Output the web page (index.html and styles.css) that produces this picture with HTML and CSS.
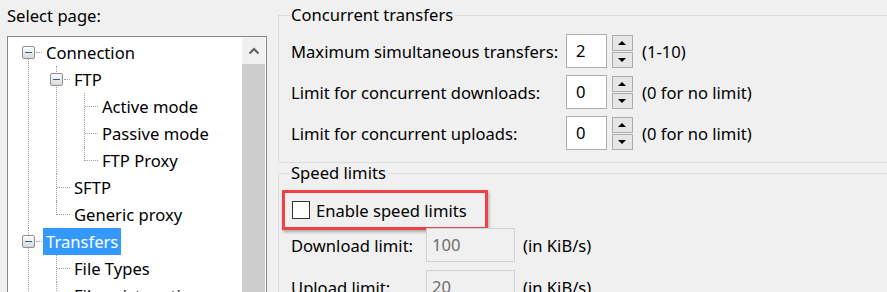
FILE: index.html
```html
<!DOCTYPE html>
<html lang="en">
<head>
    <meta charset="UTF-8">
    <title>Settings - Transfers</title>
    <link rel="stylesheet" href="styles.css">
</head>
<body>
    <div class="dialog">
        <!-- Page tree -->
        <div class="pages">
            <div class="caption">Select page:</div>
            <div class="tree">
                <div class="tree-list">
                    <ul class="nodes">
                        <li class="first">
                            <div class="node"><span class="twig open"><i class="exp"></i></span><span class="label">Connection</span></div>
                            <ul class="nodes">
                                <li>
                                    <div class="node"><span class="twig open"><i class="exp"></i></span><span class="label">FTP</span></div>
                                    <ul class="nodes">
                                        <li><div class="node"><span class="twig"></span><span class="label">Active mode</span></div></li>
                                        <li><div class="node"><span class="twig"></span><span class="label">Passive mode</span></div></li>
                                        <li class="last"><div class="node"><span class="twig"></span><span class="label">FTP Proxy</span></div></li>
                                    </ul>
                                </li>
                                <li><div class="node"><span class="twig"></span><span class="label">SFTP</span></div></li>
                                <li class="last"><div class="node"><span class="twig"></span><span class="label">Generic proxy</span></div></li>
                            </ul>
                        </li>
                        <li>
                            <div class="node"><span class="twig open"><i class="exp"></i></span><span class="label selected">Transfers</span></div>
                            <ul class="nodes">
                                <li><div class="node"><span class="twig"></span><span class="label">File Types</span></div></li>
                                <li><div class="node"><span class="twig"></span><span class="label">File exists action</span></div></li>
                            </ul>
                        </li>
                        <li><div class="node"><span class="twig"></span><span class="label">Interface</span></div></li>
                    </ul>
                </div>
                <div class="scrollbar">
                    <div class="scroll-up">
                        <svg width="12" height="8" viewBox="0 0 12 8"><path d="M1.5 6.5 L6 2 L10.5 6.5" fill="none" stroke="#606060" stroke-width="2"/></svg>
                    </div>
                    <div class="thumb"></div>
                </div>
            </div>
        </div>

        <!-- Page content -->
        <div class="content">
            <fieldset class="group">
                <legend>Concurrent transfers</legend>
                <div class="spin-row">
                    <span>Maximum simultaneous transfers:</span>
                    <span class="edit">2</span>
                    <span class="spinner"><b class="up"></b><b class="down"></b></span>
                    <span>(1-10)</span>
                </div>
                <div class="spin-row">
                    <span>Limit for concurrent downloads:</span>
                    <span class="edit">0</span>
                    <span class="spinner"><b class="up"></b><b class="down"></b></span>
                    <span>(0 for no limit)</span>
                </div>
                <div class="spin-row">
                    <span>Limit for concurrent uploads:</span>
                    <span class="edit">0</span>
                    <span class="spinner"><b class="up"></b><b class="down"></b></span>
                    <span>(0 for no limit)</span>
                </div>
            </fieldset>

            <fieldset class="group">
                <legend>Speed limits</legend>
                <div class="check-row">
                    <label class="highlight"><span class="checkbox"></span>Enable speed limits</label>
                </div>
                <div class="limit-row">
                    <span>Download limit:</span>
                    <span class="edit disabled">100</span>
                    <span>(in KiB/s)</span>
                </div>
                <div class="limit-row">
                    <span>Upload limit:</span>
                    <span class="edit disabled">20</span>
                    <span>(in KiB/s)</span>
                </div>
            </fieldset>
        </div>
    </div>
</body>
</html>
```

FILE: styles.css
```css
body {
    margin: 0;
    background-color: #f0f0f0;
    font-family: "Noto Sans", "Open Sans", sans-serif;
    font-size: 16.6px;
    color: #000;
    overflow: hidden;
}
.dialog {
    display: flex;
    height: 292px;
}
.pages {
    width: 271px;
    padding-left: 7px;
    flex: none;
}
.caption {
    line-height: 20px;
    margin-top: 6px;
}
.tree {
    display: flex;
    width: 260px;
    height: 300px;
    margin-top: 10px;
    box-sizing: border-box;
    border: 1px solid #828790;
    background-color: #fff;
}
.tree-list {
    flex: 1;
    padding-top: 2px;
}
.nodes {
    list-style: none;
    margin: 0;
    padding: 0;
}
.nodes .nodes {
    padding-left: 28px;
}
.nodes li {
    position: relative;
}
.nodes li::before {
    content: "";
    position: absolute;
    left: 20px;
    top: 0;
    bottom: 0;
    border-left: 1px dotted #a0a0a0;
}
.nodes li.first::before {
    top: 14px;
}
.nodes li.last::before {
    bottom: auto;
    height: 14px;
}
.node {
    display: flex;
    height: 27px;
}
.twig {
    position: relative;
    width: 35px;
    flex: none;
}
.twig::after {
    content: "";
    position: absolute;
    left: 21px;
    top: 13px;
    width: 13px;
    border-top: 1px dotted #a0a0a0;
}
.twig.open::after {
    left: 28px;
    width: 6px;
}
.exp {
    position: absolute;
    left: 14px;
    top: 7px;
    width: 13px;
    height: 13px;
    box-sizing: border-box;
    border: 1px solid #919191;
    border-radius: 2px;
    background: linear-gradient(#fdfdfd, #d9d9d9);
    z-index: 1;
}
.exp::after {
    content: "";
    position: absolute;
    left: 2px;
    top: 5px;
    width: 7px;
    height: 1px;
    background-color: #3f5a86;
}
.label {
    padding: 0 3px;
    line-height: 27px;
    white-space: nowrap;
}
.label.selected {
    background-color: #3399ff;
    color: #fff;
}
.scrollbar {
    width: 23px;
    margin-right: 1px;
    background-color: #f0f0f0;
    display: flex;
    flex-direction: column;
}
.scroll-up {
    height: 27px;
    display: flex;
    align-items: center;
    justify-content: center;
}
.thumb {
    flex: 1;
    background-color: #cdcdcd;
}
.content {
    flex: 1;
    overflow: hidden;
    padding-top: 5px;
}
.group {
    margin: 0 -20px 0 0;
    padding: 9px 0 12px 12px;
    border: 1px solid #dcdcdc;
    min-width: 0;
}
.group legend {
    padding: 0 2px;
    margin-left: -2px;
    line-height: 20px;
}
.spin-row {
    display: grid;
    grid-template-columns: 270px 41px 21px auto;
    column-gap: 5px;
    align-items: center;
    height: 34px;
    margin-bottom: 7px;
}
.spin-row:last-child {
    margin-bottom: 0;
}
.spin-row > span:last-child {
    margin-left: 4px;
}
.edit {
    height: 34px;
    box-sizing: border-box;
    border: 1px solid #adadad;
    background-color: #fff;
    padding-left: 9px;
    line-height: 32px;
}
.edit.disabled {
    background-color: #f0f0f0;
    border-color: #d2d2d2;
    color: #6d6d6d;
    padding-left: 5px;
}
.spinner {
    display: flex;
    flex-direction: column;
    gap: 1px;
    height: 33px;
}
.spinner b {
    flex: 1;
    position: relative;
    border: 1px solid #acacac;
    background-color: #e6e6e6;
}
.spinner b::after {
    content: "";
    position: absolute;
    left: 5px;
    top: 5px;
    border-left: 4px solid transparent;
    border-right: 4px solid transparent;
}
.spinner .up::after {
    border-bottom: 4px solid #000;
}
.spinner .down::after {
    border-top: 4px solid #000;
}
.check-row {
    display: flex;
    height: 36px;
    align-items: center;
}
.highlight {
    display: flex;
    align-items: center;
    gap: 6px;
    box-sizing: border-box;
    height: 40px;
    width: 206px;
    margin: -2px 0 -2px -9px;
    padding-left: 7px;
    border: 3px solid #ee4148;
    box-shadow: 1px 2px 3px rgba(0, 0, 0, 0.3);
}
.checkbox {
    width: 18px;
    height: 18px;
    box-sizing: border-box;
    border: 1px solid #333;
    background-color: #fff;
}
.limit-row {
    display: grid;
    grid-template-columns: 127px 89px auto;
    column-gap: 8px;
    align-items: center;
    height: 34px;
    margin-bottom: 8px;
}
```
